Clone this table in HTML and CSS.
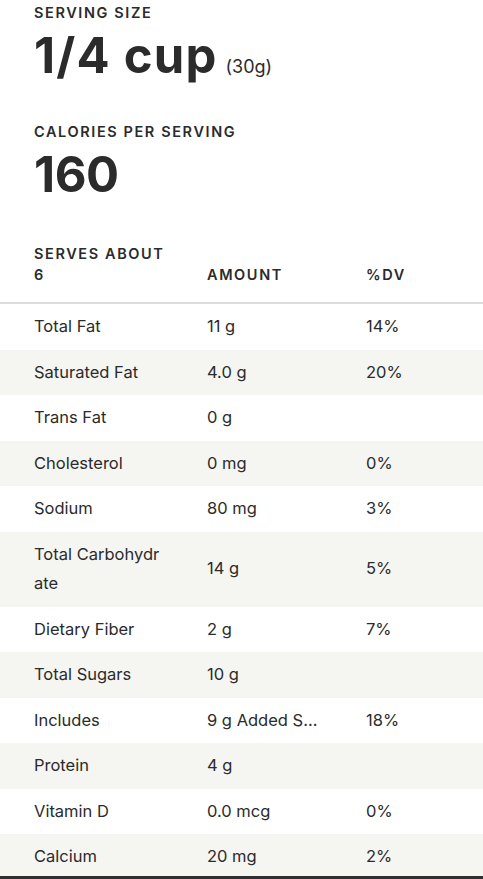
FILE: index.html
```html
<!DOCTYPE html>
<html lang="en">
<head>
    <meta charset="UTF-8">
    <meta name="viewport" content="width=device-width, initial-scale=1.0">
    <title>Nutrition Facts</title>
    <link rel="stylesheet" href="styles.css">
</head>
<body>
    <section class="facts">
        <div class="summary">
            <div class="label">Serving Size</div>
            <div class="big serving">1/4 cup<span class="weight">(30g)</span></div>
        </div>
        <div class="summary">
            <div class="label">Calories per serving</div>
            <div class="big">160</div>
        </div>

        <div class="table">
            <div class="row head">
                <div class="cell label">Serves about<br>6</div>
                <div class="cell label">Amount</div>
                <div class="cell label">%DV</div>
            </div>
            <div class="row"><div class="cell">Total Fat</div><div class="cell">11 g</div><div class="cell">14%</div></div>
            <div class="row"><div class="cell">Saturated Fat</div><div class="cell">4.0 g</div><div class="cell">20%</div></div>
            <div class="row"><div class="cell">Trans Fat</div><div class="cell">0 g</div><div class="cell"></div></div>
            <div class="row"><div class="cell">Cholesterol</div><div class="cell">0 mg</div><div class="cell">0%</div></div>
            <div class="row"><div class="cell">Sodium</div><div class="cell">80 mg</div><div class="cell">3%</div></div>
            <div class="row"><div class="cell">Total Carbohydrate</div><div class="cell">14 g</div><div class="cell">5%</div></div>
            <div class="row"><div class="cell">Dietary Fiber</div><div class="cell">2 g</div><div class="cell">7%</div></div>
            <div class="row"><div class="cell">Total Sugars</div><div class="cell">10 g</div><div class="cell"></div></div>
            <div class="row"><div class="cell">Includes</div><div class="cell">9 g Added Sugars</div><div class="cell">18%</div></div>
            <div class="row"><div class="cell">Protein</div><div class="cell">4 g</div><div class="cell"></div></div>
            <div class="row"><div class="cell">Vitamin D</div><div class="cell">0.0 mcg</div><div class="cell">0%</div></div>
            <div class="row"><div class="cell">Calcium</div><div class="cell">20 mg</div><div class="cell">2%</div></div>
        </div>
    </section>
    <div class="bottom-bar"></div>
</body>
</html>
```

FILE: styles.css
```css
body {
    margin: 0;
    background: #fff;
    color: #2b2b2b;
    font-family: Inter, "Liberation Sans", sans-serif;
}
.facts {
    height: 876px;
    overflow: hidden;
}
.summary {
    padding: 2px 34px 0;
}
.summary + .summary {
    padding-top: 24px;
}
.label {
    font-size: 14.5px;
    font-weight: 600;
    letter-spacing: 1.6px;
    text-transform: uppercase;
    line-height: 21px;
}
.big {
    font-size: 49px;
    font-weight: 700;
    line-height: 60px;
    letter-spacing: -0.5px;
    padding-top: 3px;
}
.big.serving {
    letter-spacing: 1.2px;
}
.weight {
    font-size: 18px;
    font-weight: 400;
    letter-spacing: 0;
    margin-left: 8px;
}
.table {
    margin-top: 38px;
}
.row {
    display: grid;
    grid-template-columns: 173px 159px 1fr;
    padding: 8px 0 8px 34px;
    font-size: 16.5px;
    line-height: 29.5px;
}
.row:nth-child(odd) {
    background: #f5f5f2;
}
.row.head {
    padding: 0 0 17px 34px;
    border-bottom: 2px solid #dcdcdc;
    background: #fff;
}
.row.head .cell {
    align-self: end;
    padding-right: 20px;
}
.cell {
    padding-right: 30px;
    word-break: break-all;
    align-self: center;
}
.row .cell:first-child {
    padding-right: 42px;
}
.row .cell:nth-child(2) {
    padding-right: 42px;
    white-space: nowrap;
    overflow: hidden;
    text-overflow: ellipsis;
}
.bottom-bar {
    height: 3px;
    background: #303030;
}
```
